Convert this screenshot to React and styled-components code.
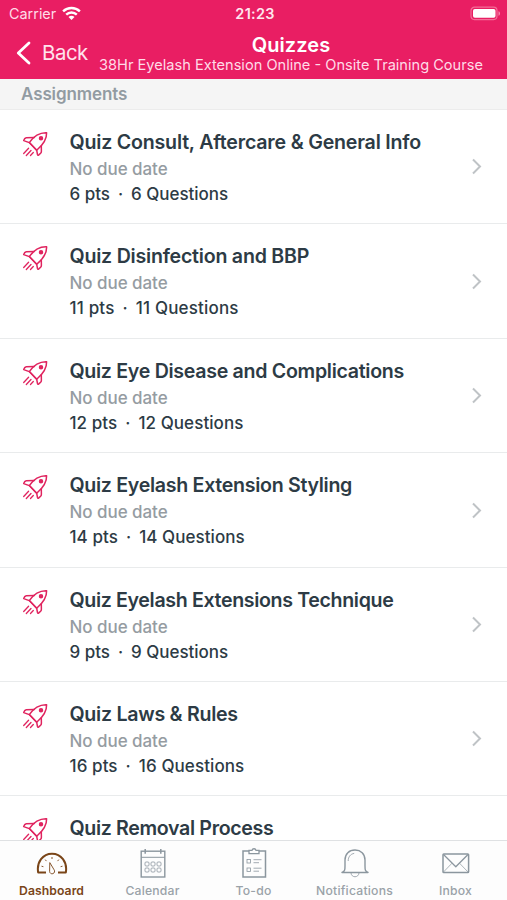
import React from "react";
import styled, { createGlobalStyle } from "styled-components";

const GlobalStyle = createGlobalStyle`
  * { box-sizing: border-box; }
  html, body { margin: 0; padding: 0; overflow: hidden; background: #fff; }
  body { font-family: Inter, "Liberation Sans", sans-serif; }
  svg { display: block; flex: none; }
`;

const Screen = styled.div`
  width: 507px;
  height: 900px;
  display: flex;
  flex-direction: column;
  overflow: hidden;
  background: #fff;
`;

const Header = styled.header`
  flex: none;
  height: 79px;
  background: #e91e63;
  color: #fff;
`;

const StatusBar = styled.div`
  height: 27px;
  display: grid;
  grid-template-columns: 1fr auto 1fr;
  align-items: center;
  padding: 0 6px 1px 9px;
`;

const Carrier = styled.div`
  display: flex;
  align-items: center;
  gap: 6px;
  font-size: 14.4px;
  letter-spacing: 0;
  color: #ffdbe7;
`;

const Clock = styled.div`
  font-size: 14.4px;
  font-weight: 600;
  letter-spacing: 0.3px;
  color: #ffe6ee;
`;

const BatterySlot = styled.div`
  display: flex;
  justify-content: flex-end;
`;

const NavBar = styled.div`
  height: 52px;
  display: flex;
  padding-left: 16px;
`;

const BackButton = styled.div`
  width: 83px;
  height: 51px;
  display: flex;
  align-items: center;
  gap: 11px;
  font-size: 20.4px;
  letter-spacing: -0.45px;
  color: #ffe3ec;
`;

const TitleBlock = styled.div`
  width: 384px;
  padding-top: 6px;
  text-align: center;
  white-space: nowrap;
`;

const Title = styled.div`
  font-size: 20px;
  line-height: 25px;
  font-weight: 600;
  letter-spacing: 0.1px;
`;

const Subtitle = styled.div`
  font-size: 14.6px;
  line-height: 14px;
  letter-spacing: 0;
  color: #ffdbe7;
`;

const SectionHeader = styled.div`
  flex: none;
  height: 31px;
  padding-left: 21px;
  background: #f5f5f5;
  border-bottom: 1px solid #ececec;
  font-size: 17px;
  line-height: 31px;
  font-weight: 600;
  letter-spacing: -0.1px;
  color: #929ba2;
`;

const List = styled.main`
  flex: 1;
  min-height: 0;
  overflow: hidden;
`;

const Row = styled.div`
  height: 114.4px;
  display: flex;
  padding: 19px 25px 0 22px;
  border-bottom: 1px solid #e9ebec;
`;

const RowIcon = styled.div`
  width: 47.5px;
  padding-top: 2px;
`;

const RowText = styled.div`
  flex: 1;
  white-space: nowrap;
`;

const QuizTitle = styled.div`
  font-size: 19.6px;
  line-height: 26px;
  font-weight: 600;
  letter-spacing: ${(p) => p.$spacing}px;
  color: #2d3b45;
`;

const DueDate = styled.div`
  margin-top: 1px;
  font-size: 17px;
  line-height: 26px;
  font-weight: 500;
  letter-spacing: -0.05px;
  color: #959ca2;
`;

const Details = styled.div`
  font-size: 17px;
  line-height: 25.4px;
  font-weight: 500;
  letter-spacing: ${(p) => p.$spacing}px;
  color: #2d3b45;
`;

const Dot = styled.span`
  margin: 0 8px;
`;

const Chevron = styled.div`
  padding-top: 29.4px;
`;

const TabBar = styled.nav`
  flex: none;
  height: 60px;
  display: flex;
  background: #fdfdfd;
  border-top: 1px solid #dfe1e3;
`;

const Tab = styled.div`
  width: 101px;
  display: flex;
  flex-direction: column;
  align-items: center;
  padding: 6px 0 0 2px;
  color: ${(p) => (p.$active ? "#7a4518" : "#8b969e")};
`;

const TabLabel = styled.div`
  margin-top: 4px;
  font-size: 12.2px;
  line-height: 16px;
  font-weight: ${(p) => (p.$active ? 600 : 500)};
  letter-spacing: ${(p) => p.$spacing}px;
  color: ${(p) => (p.$active ? "#7a4518" : "#9aa2a8")};
`;

const Wifi = () => (
  <svg width="19" height="15" viewBox="0 0 19 15" fill="none" stroke="#fff" strokeWidth="2.4">
    <path d="M1.1 5.4C5.8.9 13.2.9 17.9 5.4" />
    <path d="M4.2 8.6c3-2.9 7.6-2.9 10.6 0" />
    <path d="M9.500 14 6.500 10.900c1.700-1.500 4.300-1.500 6 0z" fill="#fff" stroke="none" />
  </svg>
);

const Battery = () => (
  <svg width="31" height="15" viewBox="0 0 31 15">
    <rect x="1" y="1.2" width="26" height="12.4" rx="3.5" fill="none" stroke="#f36d98" strokeWidth="1.2" />
    <rect x="3" y="3" width="22.500" height="8.800" rx="1.8" fill="#fff" />
    <path d="M28.5 5.2c2 .7 2 3.8 0 4.5z" fill="#f58bad" />
  </svg>
);

const Rocket = () => (
  <svg width="27" height="27" viewBox="0 0 27 27" fill="none" stroke="#e0245f" strokeWidth="1.5" strokeLinecap="round" strokeLinejoin="round">
    <path d="M7.300 11.600C12 5 17 1.500 24.600 1.800c.3 6.800-3.400 12-9.900 17.500z" />
    <path d="M12.300 6.500 4.200 6.800Q2.500 7.200 1.700 9.600l5.600 2 7.400 7.700.8 4.200q.3 1.300 1.300.4l1.800-1.700q.8-.8.8-2l-.1-5.400" />
    <circle cx="19" cy="7.300" r="1.5" fill="#e0245f" />
    <path d="M6.600 17.300 1.700 22.500M9 19.500l-4.700 5M11.300 21.500l-2.800 3" strokeWidth="1.3" />
  </svg>
);

const Gauge = () => (
  <svg width="32" height="32" viewBox="0 0 32 32" fill="none" stroke="currentColor" strokeLinejoin="round">
    <path d="M10 25.6H2.2C.3 15.1 7 6.7 16 6.7s15.7 8.4 13.8 18.9H22" strokeWidth="2" />
    <path d="m13.800 15.600 4.300 7.200a2.500 2.500 0 1 1-4.500 1.600z" strokeWidth=".9" />
    <path d="M16 10v2M9.2 12.6l1.2 1.5M22.800 12.600l-1.200 1.500M5.500 19.200l1.900.5M26.500 19.200l-1.900.5" strokeWidth=".9" />
  </svg>
);

const CalendarIcon = () => (
  <svg width="32" height="32" viewBox="0 0 32 32" fill="none" stroke="currentColor">
    <rect x="4.200" y="4.200" width="23.600" height="25.800" strokeWidth="1.4" />
    <path d="M4.200 10.300h23.600" />
    <path d="M8.200 2v4.700M23.800 2v4.700" strokeWidth="1.5" />
    {[15, 21].map((y) =>
      [8, 14, 20].map((x) => <rect key={`${x}-${y}`} x={x} y={y} width="4" height="4" rx="1" strokeWidth=".8" />)
    )}
  </svg>
);

const Clipboard = () => (
  <svg width="32" height="32" viewBox="0 0 32 32" fill="none" stroke="currentColor">
    <path d="M11 4H5v26h22.500V4H21" strokeWidth="1.5" />
    <path d="M11 6.600h10V3.400h-3c-.5-2.200-3.500-2.200-4 0h-3z" strokeWidth="1.3" />
    <rect x="9" y="12.500" width="3.500" height="3.500" strokeWidth=".8" />
    <rect x="9" y="21" width="3.500" height="3.500" strokeWidth=".8" />
    <path d="M15.500 12.700h8M15.500 15.700h5.500M15.500 21.200h8M15.500 24.200h5.500" strokeWidth=".8" />
  </svg>
);

const Bell = () => (
  <svg width="32" height="32" viewBox="0 0 32 32" fill="none" stroke="currentColor">
    <path d="M3 25.500c2.800-1.100 3-2.600 3-6.500v-6C6 6.800 10.200 3 16 3s10 3.800 10 10v6c0 3.900.2 5.400 3 6.500z" strokeWidth="1.4" strokeLinejoin="round" />
    <path d="M9.200 14c0-4.200 2.200-7 6-7.600M12 26c.4 5 7.600 5 8 0" strokeWidth=".8" />
  </svg>
);

const Mail = () => (
  <svg width="32" height="32" viewBox="0 0 32 32" fill="none" stroke="currentColor" strokeLinejoin="round">
    <rect x="3" y="7" width="25.600" height="18.500" rx=".8" strokeWidth="1.500" />
    <path d="m3.500 7.500 12.300 12.200L28 7.500" strokeWidth="1.300" />
    <path d="m3.500 25 8.500-8.800M28 25l-8.500-8.800" strokeWidth=".7" />
  </svg>
);

const quizzes = [
  { title: "Quiz Consult, Aftercare & General Info", count: 6, spacing: -0.2, detailSpacing: -0.03 },
  { title: "Quiz Disinfection and BBP", count: 11, spacing: -0.23, detailSpacing: 0.17 },
  { title: "Quiz Eye Disease and Complications", count: 12, spacing: -0.3, detailSpacing: 0.06 },
  { title: "Quiz Eyelash Extension Styling", count: 14, spacing: -0.3, detailSpacing: 0.06 },
  { title: "Quiz Eyelash Extensions Technique", count: 9, spacing: -0.35, detailSpacing: -0.03 },
  { title: "Quiz Laws & Rules", count: 16, spacing: -0.27, detailSpacing: 0.08 },
  { title: "Quiz Removal Process", spacing: -0.34 },
];

const tabs = [
  { label: "Dashboard", Icon: Gauge, active: true, spacing: 0.07 },
  { label: "Calendar", Icon: CalendarIcon, spacing: 0.2 },
  { label: "To-do", Icon: Clipboard, spacing: 0.2 },
  { label: "Notifications", Icon: Bell, spacing: 0.22 },
  { label: "Inbox", Icon: Mail, spacing: 0.2 },
];

export default function App() {
  return (
    <>
      <GlobalStyle />
      <Screen>
        <Header>
          <StatusBar>
            <Carrier>Carrier <Wifi /></Carrier>
            <Clock>21:23</Clock>
            <BatterySlot><Battery /></BatterySlot>
          </StatusBar>
          <NavBar>
            <BackButton>
              <svg width="15" height="24" viewBox="0 0 15 24" fill="none" stroke="#fff" strokeWidth="2.8" strokeLinecap="round" strokeLinejoin="round">
                <path d="M13 2 2.300 12 13 22" />
              </svg>
              Back
            </BackButton>
            <TitleBlock>
              <Title>Quizzes</Title>
              <Subtitle>38Hr Eyelash Extension Online - Onsite Training Course</Subtitle>
            </TitleBlock>
          </NavBar>
        </Header>
        <SectionHeader>Assignments</SectionHeader>
        <List>
          {quizzes.map(({ title, count, spacing, detailSpacing }) => (
            <Row key={title}>
              <RowIcon><Rocket /></RowIcon>
              <RowText>
                <QuizTitle $spacing={spacing}>{title}</QuizTitle>
                {count && (
                  <>
                    <DueDate>No due date</DueDate>
                    <Details $spacing={detailSpacing}>{count} pts<Dot>·</Dot>{count} Questions</Details>
                  </>
                )}
              </RowText>
              <Chevron>
                <svg width="10" height="17" viewBox="0 0 10 17" fill="none" stroke="#bfc3c6" strokeWidth="2">
                  <path d="m1 1.500 7 7-7 7" />
                </svg>
              </Chevron>
            </Row>
          ))}
        </List>
        <TabBar>
          {tabs.map(({ label, Icon, active, spacing }) => (
            <Tab key={label} $active={active}>
              <Icon />
              <TabLabel $active={active} $spacing={spacing}>{label}</TabLabel>
            </Tab>
          ))}
        </TabBar>
      </Screen>
    </>
  );
}
